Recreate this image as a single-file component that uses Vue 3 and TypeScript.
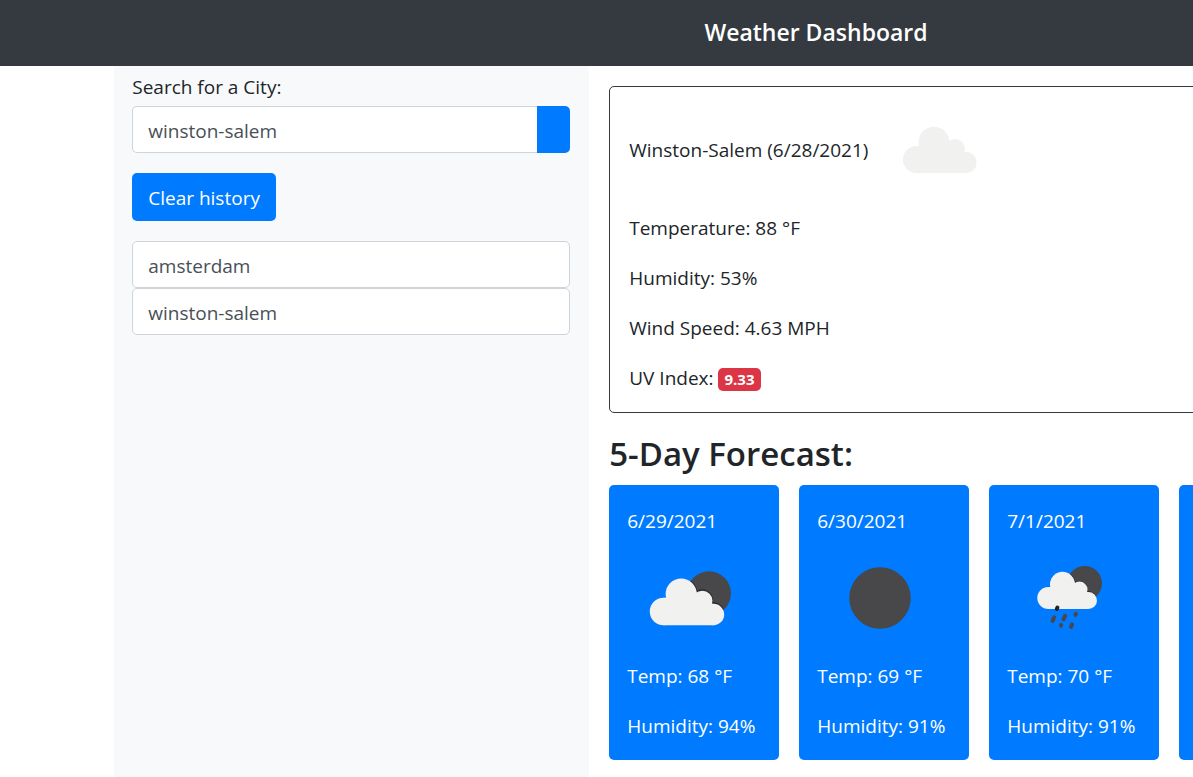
<script setup lang="ts">
import { ref } from 'vue'

interface ForecastDay {
  date: string
  icon: 'clouds' | 'clear' | 'rain'
  temp: number
  humidity: number
}

const city = ref('winston-salem')
const history = ref<string[]>(['amsterdam', 'winston-salem'])

const readings: string[] = ['Temperature: 88 °F', 'Humidity: 53%', 'Wind Speed: 4.63 MPH']

const forecast: (ForecastDay | null)[] = [
  { date: '6/29/2021', icon: 'clouds', temp: 68, humidity: 94 },
  { date: '6/30/2021', icon: 'clear', temp: 69, humidity: 91 },
  { date: '7/1/2021', icon: 'rain', temp: 70, humidity: 91 },
  null,
  null,
]

function clearHistory(): void {
  history.value = []
}
</script>

<template>
  <div class="page">
    <svg class="defs" aria-hidden="true">
      <defs>
        <g id="cloud">
          <circle cx="39.5" cy="53.5" r="13.6" />
          <circle cx="57" cy="36.2" r="15.4" />
          <circle cx="78" cy="43" r="10" />
          <circle cx="89" cy="56.5" r="10.6" />
          <path d="M39.5 67.1 V40 H43 V34 H72 L80 46 H89 V67.1 Z" />
        </g>
        <clipPath id="disc-large"><circle cx="82" cy="39.3" r="22" /></clipPath>
        <clipPath id="disc-small"><circle cx="77.7" cy="29.3" r="17.3" /></clipPath>
      </defs>
    </svg>

    <header class="topbar">
      <h1>Weather Dashboard</h1>
    </header>

    <div class="layout">
      <aside class="sidebar">
        <form class="search" @submit.prevent>
          <label for="city">Search for a City:</label>
          <div class="input-group">
            <input id="city" v-model="city" type="text" />
            <button type="submit" aria-label="Search"></button>
          </div>
        </form>
        <button class="clear" type="button" @click="clearHistory">Clear history</button>
        <div class="history">
          <input
            v-for="item in history"
            :key="item"
            type="text"
            readonly
            :value="item"
            :aria-label="item"
            @click="city = item"
          />
        </div>
      </aside>

      <main class="content">
        <section class="current">
          <div class="current-head">
            <span>Winston-Salem (6/28/2021)</span>
            <svg class="icon" viewBox="0 0 125 87" role="img" aria-label="Cloudy">
              <use href="#cloud" class="cloud" />
            </svg>
          </div>
          <p v-for="line in readings" :key="line">{{ line }}</p>
          <p>UV Index: <span class="badge">9.33</span></p>
        </section>

        <h2>5-Day Forecast:</h2>

        <section class="forecast">
          <article v-for="(day, i) in forecast" :key="i" class="day">
            <template v-if="day">
              <p>{{ day.date }}</p>
              <svg class="icon" viewBox="0 0 125 87" aria-hidden="true">
                <template v-if="day.icon === 'clouds'">
                  <circle class="disc" cx="82" cy="39.3" r="22" />
                  <g clip-path="url(#disc-large)">
                    <use href="#cloud" class="edge" transform="translate(-3 3.3)" />
                  </g>
                  <use href="#cloud" class="cloud" transform="translate(-3.4 3.4) scale(1.01)" />
                </template>
                <circle v-else-if="day.icon === 'clear'" class="disc" cx="63" cy="44" r="30.8" />
                <template v-else>
                  <circle class="disc" cx="77.7" cy="29.3" r="17.3" />
                  <g clip-path="url(#disc-small)">
                    <use href="#cloud" class="edge" transform="translate(9.8 1.2) scale(0.8)" />
                  </g>
                  <use href="#cloud" class="cloud" transform="translate(9.3 1.2) scale(0.81 0.8)" />
                  <g class="drops">
                    <path class="drop-dark" d="M50.4 53.6 L49.8 55" />
                    <path d="M47.2 63.3 L45.6 67" />
                    <path d="M58.1 61.8 L56.5 65.3" />
                    <path d="M68.9 59.9 L68.5 60.8" />
                    <path d="M54.1 71.1 L53.9 71.6" />
                    <path d="M65 70.6 L64 72.8" />
                  </g>
                </template>
              </svg>
              <p>Temp: {{ day.temp }} °F</p>
              <p>Humidity: {{ day.humidity }}%</p>
            </template>
          </article>
        </section>
      </main>
    </div>
  </div>
</template>

<style>
body {
  margin: 0;
  overflow-x: hidden;
  background: #fff;
}
</style>

<style scoped>
* {
  box-sizing: border-box;
}

.page {
  display: flex;
  flex-direction: column;
  min-width: 1632px;
  min-height: 100vh;
  color: #212529;
  font-family: 'Open Sans', 'Noto Sans', sans-serif;
  font-size: 19px;
  line-height: 30px;
}

.defs {
  position: absolute;
  width: 0;
  height: 0;
}

.topbar {
  padding: 14px 20px 16px;
  background: #343a40;
  color: #fff;
  text-align: center;
}

h1 {
  margin: 0;
  font-size: 23px;
  font-weight: 600;
  line-height: 36px;
}

.layout {
  display: grid;
  flex: 1;
  grid-template-columns: 1fr 2fr;
  width: 1425px;
  margin-left: 7%;
}

.sidebar {
  padding: 6px 19px 20px 18px;
  background: #f8f9fa;
}

label {
  display: block;
  margin-bottom: 4px;
}

input,
button {
  font: inherit;
}

.input-group {
  display: flex;
}

input {
  display: block;
  width: 100%;
  min-width: 0;
  height: 47px;
  padding: 2px 15px 0;
  border: 1px solid #ced4da;
  border-radius: 5px;
  background: #fff;
  color: #495057;
}

.input-group input {
  flex: 1;
  border-right: 0;
  border-radius: 5px 0 0 5px;
}

button {
  border: 0;
  background: #007bff;
  color: #fff;
}

.input-group button {
  width: 33px;
  border-radius: 0 5px 5px 0;
}

.clear {
  height: 48px;
  margin: 20px 0;
  padding: 2px 16px 0;
  border-radius: 5px;
}

.content {
  padding: 20px 0 17px 20px;
}

.current {
  padding: 19px;
  border: 1px solid #343a40;
  border-radius: 5px;
}

.current-head {
  display: flex;
  gap: 9px;
  align-items: center;
}

.icon {
  display: block;
  width: 125px;
  height: 87px;
}

p {
  margin: 20px 0 0;
}

.badge {
  display: inline-block;
  padding: 4px 6px;
  border-radius: 5px;
  background: #dc3545;
  color: #fff;
  font-size: 15px;
  font-weight: 700;
  line-height: 15px;
}

h2 {
  margin: 20px 0 10px;
  font-size: 33px;
  font-weight: 600;
  line-height: 42px;
}

.forecast {
  display: grid;
  grid-template-columns: repeat(5, 1fr);
  gap: 20px;
}

.day {
  padding: 21px 18px 19px;
  border-radius: 5px;
  background: #007bff;
  color: #fff;
  white-space: nowrap;
}

.day p:first-child {
  margin: 0 0 18px;
}

.cloud {
  fill: #f1f1f0;
}

.edge {
  fill: #2b2b2d;
  stroke: #2b2b2d;
  stroke-width: 2;
}

.disc {
  fill: #48484a;
}

.drops {
  fill: none;
  stroke: #48484a;
  stroke-linecap: round;
  stroke-width: 4;
}

.drop-dark {
  stroke: #232324;
}
</style>
